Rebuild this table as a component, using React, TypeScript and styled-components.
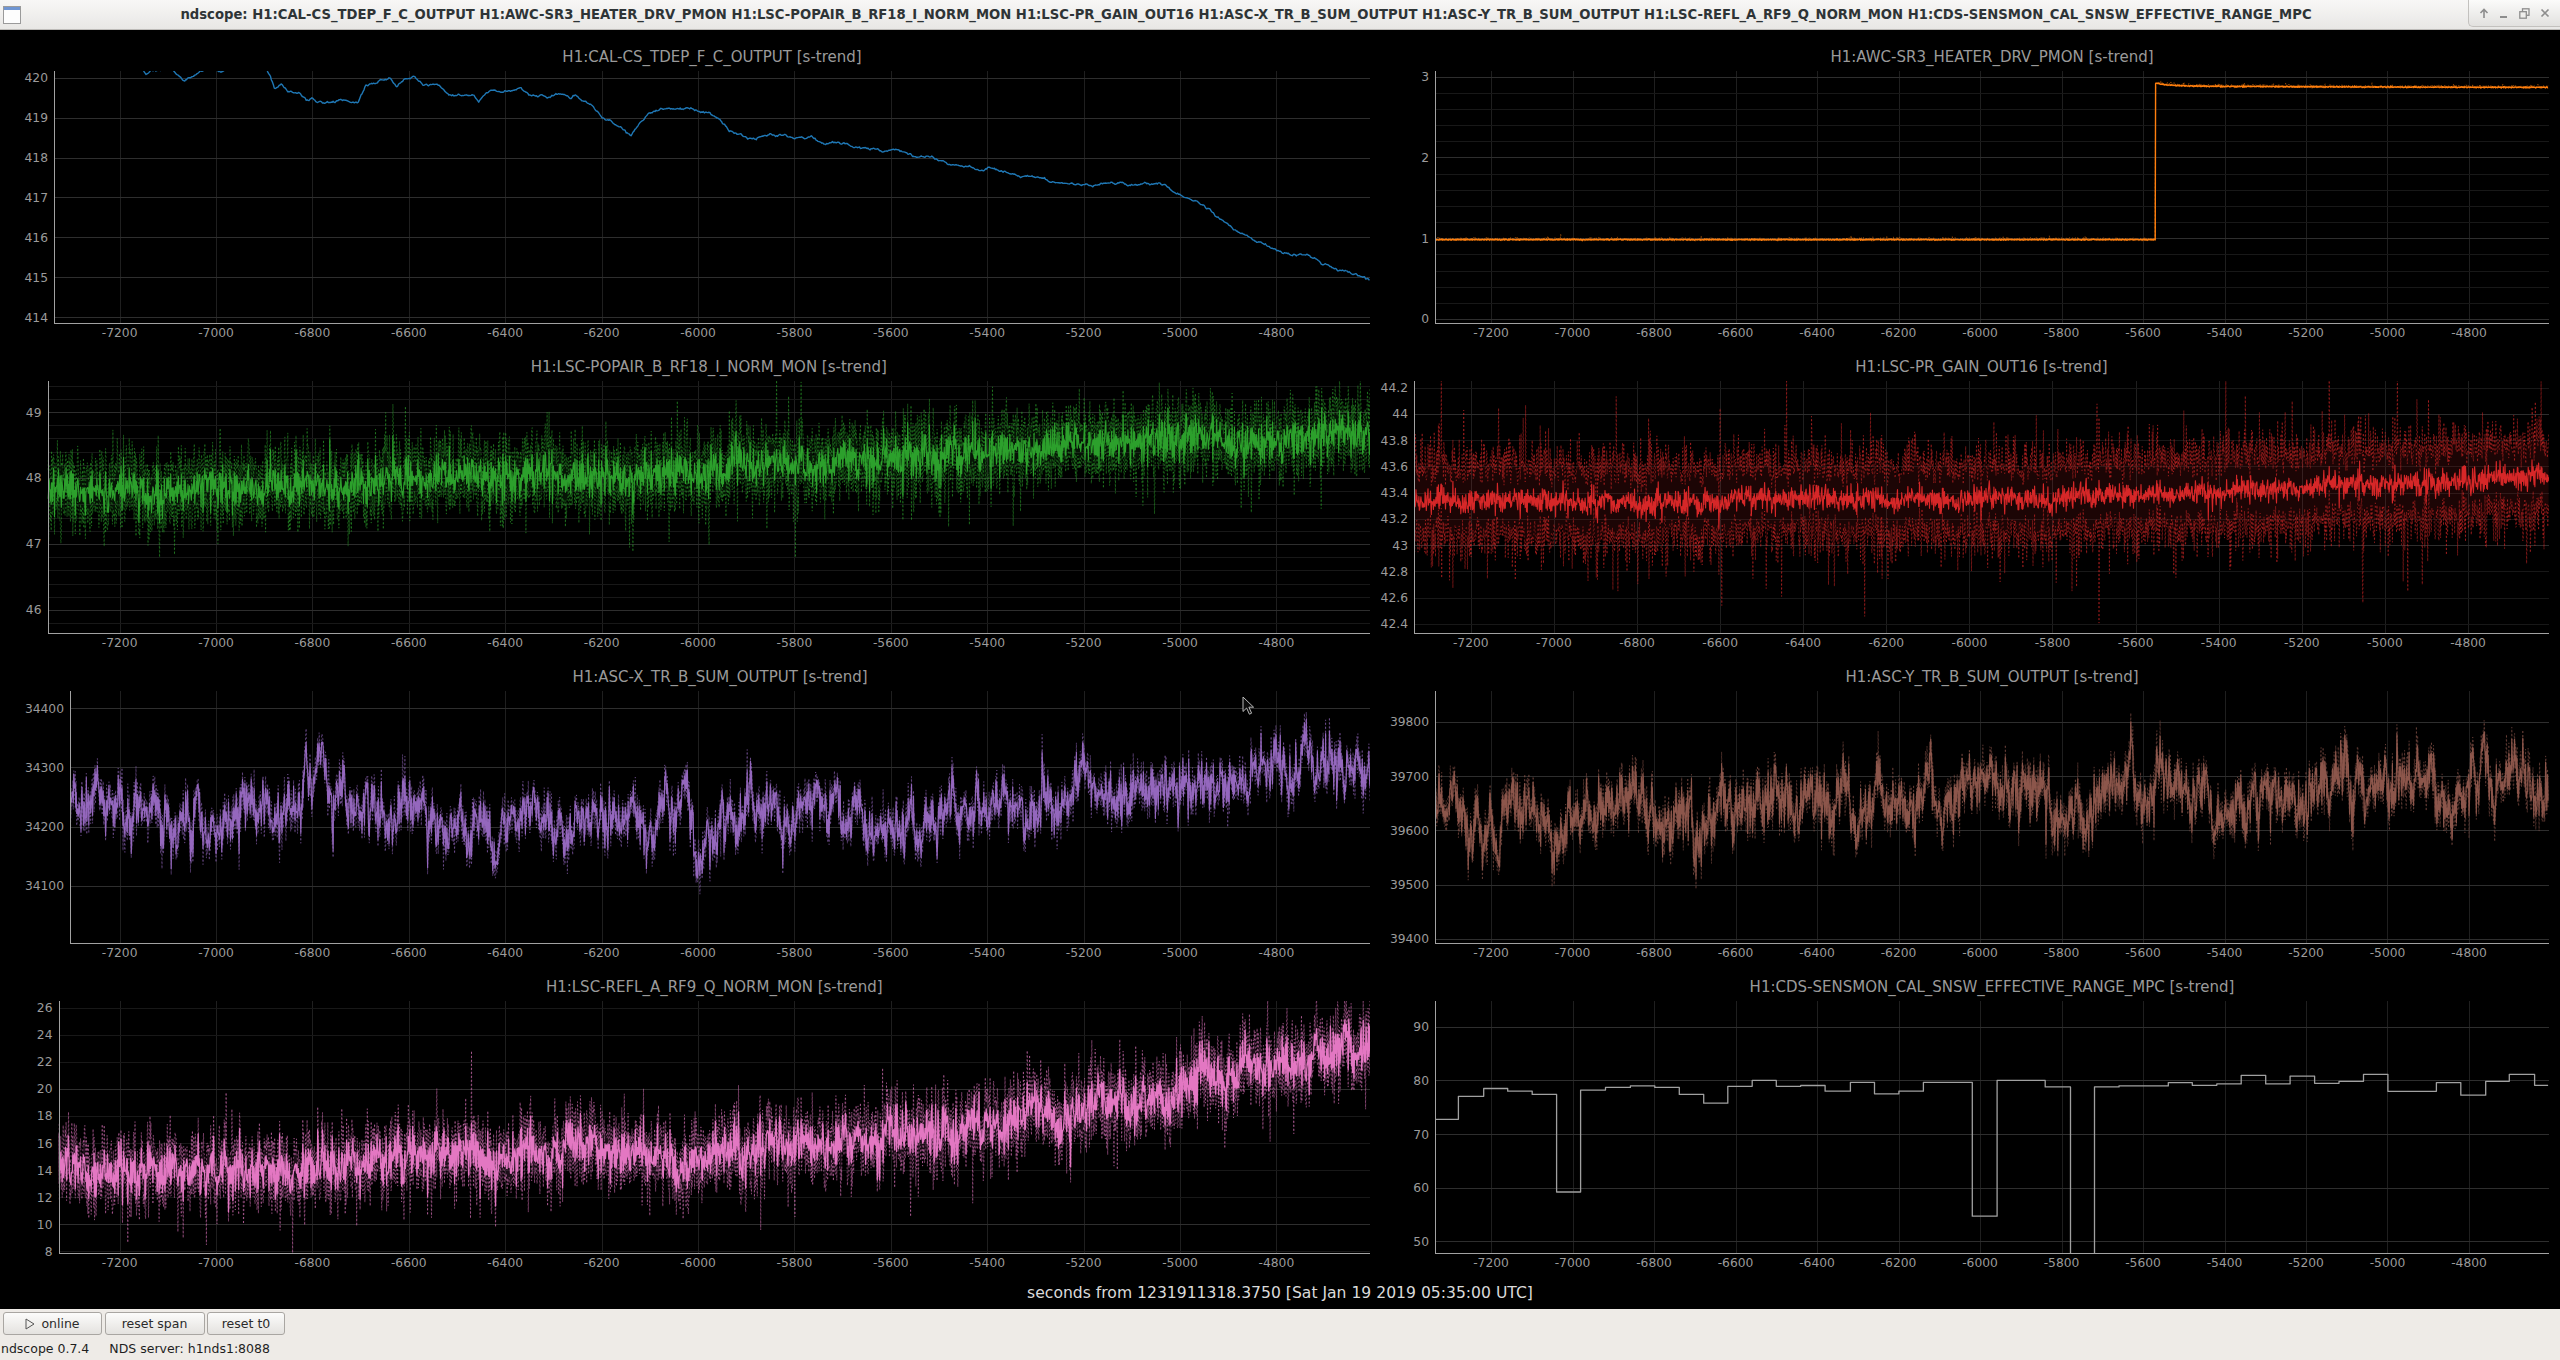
import React, { useMemo } from 'react'
import styled, { createGlobalStyle } from 'styled-components'

const GlobalStyle = createGlobalStyle`
  html, body {
    margin: 0;
    padding: 0;
    background: #000;
  }
  body {
    font-family: 'DejaVu Sans', 'Liberation Sans', sans-serif;
    overflow: hidden;
  }
`

// time axis (seconds relative to t0)
const T_END = -4606
const XTICKS = [-7200, -7000, -6800, -6600, -6400, -6200, -6000, -5800, -5600, -5400, -5200, -5000, -4800]
const LEFT_W = 1370
const RIGHT_W = 1190
const CHART_H = 269
const PLOT_H = 252

type Pt = [number, number]
type Series = { t: number[]; mean: number[]; lo?: number[]; hi?: number[] }

type PlotSpec = {
  title: string
  color: string
  axisX: number
  right: number
  x0: number
  k: number
  yTop: number
  yBot: number
  labels: number[]
  major: number[]
  minor: number[]
  series: Series
  lineWidth?: number
  envFill?: number
}

function mulberry32(seed: number) {
  let a = seed
  return () => {
    a |= 0
    a = (a + 0x6d2b79f5) | 0
    let t = Math.imul(a ^ (a >>> 15), 1 | a)
    t = (t + Math.imul(t ^ (t >>> 7), 61 | t)) ^ t
    return ((t ^ (t >>> 14)) >>> 0) / 4294967296
  }
}

function gauss(r: () => number) {
  let u = 0
  while (u === 0) u = r()
  const v = r()
  return Math.sqrt(-2 * Math.log(u)) * Math.cos(2 * Math.PI * v)
}

function interp(pts: Pt[], t: number) {
  if (t <= pts[0][0]) return pts[0][1]
  for (let i = 1; i < pts.length; i++) {
    if (t <= pts[i][0]) {
      const [ta, va] = pts[i - 1]
      const [tb, vb] = pts[i]
      return va + ((vb - va) * (t - ta)) / (tb - ta)
    }
  }
  return pts[pts.length - 1][1]
}

function ticks(a: number, b: number, step: number) {
  const n = Math.round((b - a) / step)
  return Array.from({ length: n + 1 }, (_, i) => +(a + i * step).toFixed(6))
}

function without(list: number[], drop: number[]) {
  return list.filter((v) => !drop.some((d) => Math.abs(d - v) < 1e-6))
}

type NoiseCfg = {
  seed: number
  trend: Pt[]
  slowA: number
  slowB: number
  white: number
  env: number
  envJit: number
}

function noisy(t0: number, c: NoiseCfg): Series {
  const r = mulberry32(c.seed)
  let a = 0
  let b = 0
  const t: number[] = []
  const mean: number[] = []
  const lo: number[] = []
  const hi: number[] = []
  const ra = Math.sqrt(1 - 0.995 * 0.995)
  const rb = Math.sqrt(1 - 0.9 * 0.9)
  for (let s = t0; s <= T_END; s += 1) {
    a = 0.995 * a + ra * c.slowA * gauss(r)
    b = 0.9 * b + rb * c.slowB * gauss(r)
    const spike = r() < 0.025 ? 1.8 : 1
    const m = interp(c.trend, s) + a + b + c.white * gauss(r) * spike
    const e1 = (c.env + c.envJit * Math.abs(gauss(r))) * (r() < 0.03 ? 1.9 : 1)
    const e2 = (c.env + c.envJit * Math.abs(gauss(r))) * (r() < 0.03 ? 1.9 : 1)
    t.push(s)
    mean.push(m)
    lo.push(m - e1)
    hi.push(m + e2)
  }
  return { t, mean, lo, hi }
}

function calOutput(): Series {
  const pts: Pt[] = [
    [-7337, 420.6], [-7160, 420.4], [-7145, 420.04], [-7132, 420.22], [-7090, 420.22], [-7066, 419.92],
    [-7030, 420.12], [-7005, 420.3], [-6995, 420.13], [-6968, 420.16], [-6902, 420.4], [-6890, 420.1],
    [-6878, 419.7], [-6866, 419.8], [-6852, 419.65], [-6830, 419.65], [-6810, 419.45], [-6790, 419.38],
    [-6760, 419.38], [-6745, 419.46], [-6722, 419.42], [-6705, 419.38], [-6690, 419.8], [-6670, 419.88],
    [-6652, 419.95], [-6640, 420.0], [-6625, 419.82], [-6606, 419.96], [-6590, 420.03], [-6572, 419.84],
    [-6545, 419.8], [-6522, 419.6], [-6500, 419.55], [-6465, 419.55], [-6455, 419.38], [-6438, 419.62],
    [-6410, 419.66], [-6386, 419.68], [-6370, 419.78], [-6350, 419.6], [-6330, 419.57], [-6300, 419.48],
    [-6285, 419.58], [-6258, 419.52], [-6240, 419.38], [-6220, 419.33], [-6200, 419.02], [-6175, 418.85],
    [-6152, 418.68], [-6138, 418.56], [-6120, 418.9], [-6100, 419.1], [-6070, 419.2], [-6040, 419.26],
    [-6010, 419.16], [-5975, 419.1], [-5957, 418.95], [-5935, 418.62], [-5905, 418.55], [-5880, 418.46],
    [-5850, 418.62], [-5821, 418.6], [-5800, 418.5], [-5770, 418.52], [-5740, 418.38], [-5700, 418.34],
    [-5660, 418.26], [-5618, 418.2], [-5585, 418.22], [-5550, 418.06], [-5515, 418.0], [-5483, 417.86],
    [-5450, 417.82], [-5415, 417.73], [-5370, 417.68], [-5340, 417.56], [-5300, 417.52], [-5270, 417.4],
    [-5246, 417.36], [-5210, 417.33], [-5178, 417.32], [-5130, 417.36], [-5077, 417.34], [-5043, 417.38],
    [-5025, 417.22], [-5009, 417.1], [-4975, 416.95], [-4941, 416.72], [-4915, 416.45], [-4890, 416.25],
    [-4865, 416.05], [-4840, 415.92], [-4815, 415.75], [-4789, 415.6], [-4760, 415.55], [-4738, 415.52],
    [-4705, 415.36], [-4670, 415.2], [-4640, 415.05], [-4606, 414.95],
  ]
  const r = mulberry32(11)
  let b = 0
  const t: number[] = []
  const mean: number[] = []
  for (let s = -7337; s <= T_END; s += 2) {
    b = 0.85 * b + 0.014 * gauss(r)
    t.push(s)
    mean.push(interp(pts, s) + b)
  }
  return { t, mean }
}

function heater(): Series {
  const r = mulberry32(23)
  const t: number[] = []
  const mean: number[] = []
  const lo: number[] = []
  const hi: number[] = []
  for (let s = -7337; s <= T_END; s += 1) {
    const dt = s + 5569
    const m =
      dt < 0
        ? 0.982 + 0.003 * gauss(r)
        : 2.862 + 0.022 * Math.exp(-dt / 700) + 0.035 * Math.exp(-dt / 35) + 0.003 * gauss(r)
    t.push(s)
    mean.push(m)
    lo.push(m - 0.004 - 0.004 * Math.abs(gauss(r)))
    hi.push(m + 0.004 + 0.01 * Math.abs(gauss(r)) * (r() < 0.05 ? 2 : 1))
  }
  return { t, mean, lo, hi }
}

function senseRange(): Series {
  const steps: Pt[] = [
    [-7337, 72.75], [-7280, 77.05], [-7218, 78.5], [-7159, 78.0], [-7099, 77.4], [-7039, 59.2],
    [-6980, 78.2], [-6919, 78.7], [-6858, 79.0], [-6798, 78.7], [-6738, 77.4], [-6678, 75.75],
    [-6619, 78.9], [-6559, 80.0], [-6500, 78.9], [-6440, 79.05], [-6380, 78.0], [-6318, 79.65],
    [-6259, 77.5], [-6199, 78.0], [-6139, 79.65], [-6019, 54.7], [-5958, 80.0], [-5840, 78.8],
    [-5778, 20], [-5719, 78.8], [-5659, 78.97], [-5538, 79.6], [-5479, 79.1], [-5419, 79.35],
    [-5359, 80.96], [-5299, 79.35], [-5239, 80.8], [-5179, 79.47], [-5119, 79.84], [-5059, 81.14],
    [-4999, 77.98], [-4880, 79.6], [-4820, 77.24], [-4759, 79.84], [-4701, 81.14], [-4639, 79.1],
  ]
  const t: number[] = []
  const mean: number[] = []
  steps.forEach(([ts, v], i) => {
    if (i > 0) {
      t.push(ts)
      mean.push(steps[i - 1][1])
    }
    t.push(ts)
    mean.push(v)
  })
  t.push(T_END)
  mean.push(steps[steps.length - 1][1])
  return { t, mean }
}

const LEFT_MAP = { x0: 119.6, k: 0.482, right: LEFT_W }
const RIGHT_MAP = { x0: 121, k: 0.4075, right: 1179 }

function startTime(axisX: number, x0: number, k: number) {
  return Math.ceil(-7200 - (x0 - axisX) / k)
}

function buildSpecs(): PlotSpec[] {
  return [
    {
      title: 'H1:CAL-CS_TDEP_F_C_OUTPUT [s-trend]',
      color: '#1f77b4',
      axisX: 54,
      ...LEFT_MAP,
      yTop: 420.17,
      yBot: 413.85,
      labels: ticks(414, 420, 1),
      major: ticks(414, 420, 1),
      minor: [],
      series: calOutput(),
      lineWidth: 1.4,
    },
    {
      title: 'H1:AWC-SR3_HEATER_DRV_PMON [s-trend]',
      color: '#ff7f0e',
      axisX: 65,
      ...RIGHT_MAP,
      yTop: 3.07,
      yBot: -0.05,
      labels: ticks(0, 3, 1),
      major: ticks(0, 3, 1),
      minor: without(ticks(0, 3, 0.2), ticks(0, 3, 1)),
      series: heater(),
      lineWidth: 1.4,
      envFill: 0,
    },
    {
      title: 'H1:LSC-POPAIR_B_RF18_I_NORM_MON [s-trend]',
      color: '#2ca02c',
      axisX: 47.5,
      ...LEFT_MAP,
      yTop: 49.47,
      yBot: 45.65,
      labels: ticks(46, 49, 1),
      major: ticks(46, 49, 1),
      minor: without(ticks(45.8, 49.4, 0.2), ticks(46, 49, 1)),
      series: noisy(startTime(47.5, 119.6, 0.482), {
        seed: 3,
        trend: [[-7337, 47.85], [-6500, 47.95], [-6000, 48.1], [-5415, 48.38], [-5077, 48.52], [-4606, 48.72]],
        slowA: 0.05,
        slowB: 0.05,
        white: 0.16,
        env: 0.17,
        envJit: 0.17,
      }),
    },
    {
      title: 'H1:LSC-PR_GAIN_OUT16 [s-trend]',
      color: '#d62728',
      axisX: 44,
      x0: 100.8,
      k: 0.4155,
      right: 1179,
      yTop: 44.25,
      yBot: 42.33,
      labels: ticks(42.4, 44.2, 0.2),
      major: [43, 44],
      minor: without(ticks(42.4, 44.2, 0.2), [43, 44]),
      series: noisy(startTime(44, 100.8, 0.4155), {
        seed: 5,
        trend: [[-7337, 43.34], [-6000, 43.35], [-5400, 43.4], [-5000, 43.45], [-4606, 43.52]],
        slowA: 0.012,
        slowB: 0.015,
        white: 0.045,
        env: 0.17,
        envJit: 0.13,
      }),
    },
    {
      title: 'H1:ASC-X_TR_B_SUM_OUTPUT [s-trend]',
      color: '#9467bd',
      axisX: 70,
      ...LEFT_MAP,
      yTop: 34428.7,
      yBot: 34003.9,
      labels: ticks(34100, 34400, 100),
      major: ticks(34100, 34400, 100),
      minor: [],
      series: noisy(startTime(70, 119.6, 0.482), {
        seed: 7,
        trend: [[-7337, 34225], [-6000, 34222], [-5400, 34240], [-4800, 34282], [-4606, 34292]],
        slowA: 16,
        slowB: 26,
        white: 15,
        env: 6,
        envJit: 10,
      }),
    },
    {
      title: 'H1:ASC-Y_TR_B_SUM_OUTPUT [s-trend]',
      color: '#8c564b',
      axisX: 65,
      ...RIGHT_MAP,
      yTop: 39857,
      yBot: 39392.6,
      labels: ticks(39400, 39800, 100),
      major: ticks(39400, 39800, 100),
      minor: [],
      series: noisy(startTime(65, 121, 0.4075), {
        seed: 9,
        trend: [[-7337, 39655], [-6000, 39650], [-5400, 39668], [-4606, 39685]],
        slowA: 18,
        slowB: 30,
        white: 17,
        env: 7,
        envJit: 11,
      }),
    },
    {
      title: 'H1:LSC-REFL_A_RF9_Q_NORM_MON [s-trend]',
      color: '#e377c2',
      axisX: 58.5,
      ...LEFT_MAP,
      yTop: 26.49,
      yBot: 7.88,
      labels: ticks(8, 26, 2),
      major: [10, 20],
      minor: without(ticks(8, 26, 2), [10, 20]),
      series: noisy(startTime(58.5, 119.6, 0.482), {
        seed: 13,
        trend: [[-7337, 14], [-6700, 14.2], [-6000, 15.4], [-5750, 16.0], [-5400, 17.2], [-5077, 19.5], [-4738, 22.0], [-4606, 23.2]],
        slowA: 0.35,
        slowB: 0.5,
        white: 0.85,
        env: 0.65,
        envJit: 0.85,
      }),
      lineWidth: 1.3,
    },
    {
      title: 'H1:CDS-SENSMON_CAL_SNSW_EFFECTIVE_RANGE_MPC [s-trend]',
      color: '#a0a0a0',
      axisX: 65,
      ...RIGHT_MAP,
      yTop: 94.8,
      yBot: 47.84,
      labels: ticks(50, 90, 10),
      major: ticks(50, 90, 10),
      minor: [],
      series: senseRange(),
      lineWidth: 1.3,
    },
  ]
}

function fmt(v: number) {
  return String(+v.toFixed(1))
}

const Window = styled.div`
  width: 2560px;
  height: 1360px;
  display: flex;
  flex-direction: column;
  overflow: hidden;
`

const TitleBar = styled.header`
  flex: none;
  height: 30px;
  display: flex;
  align-items: flex-start;
  box-sizing: border-box;
  background: linear-gradient(#f8f7f6, #e8e7e5);
  border-bottom: 1px solid #bdbbb8;
`

const WinIcon = styled.div`
  width: 24px;
  height: 29px;
  display: flex;
  align-items: center;
  justify-content: center;
`

const WinTitle = styled.div`
  flex: 1;
  text-align: center;
  font-family: 'DejaVu Sans', 'Liberation Sans', sans-serif;
  font-weight: bold;
  font-size: 13.2px;
  line-height: 29px;
  color: #2e3436;
  white-space: nowrap;
  overflow: hidden;
`

const WinControls = styled.div`
  width: 92px;
  height: 27px;
  display: flex;
  align-items: center;
  justify-content: space-evenly;
  box-sizing: border-box;
  border-left: 1px solid #c3c1be;
  border-bottom: 1px solid #c3c1be;
  border-bottom-left-radius: 5px;
  background: linear-gradient(#fbfbfa, #e2e1df);
`

const Scope = styled.main`
  position: relative;
  flex: none;
  height: 1279px;
  background: #000;
  display: flex;
  flex-direction: column;
`

const PlotGrid = styled.div`
  display: grid;
  grid-template-columns: ${LEFT_W}px ${RIGHT_W}px;
  grid-template-rows: repeat(4, 310px);
`

const Cell = styled.section`
  display: flex;
  flex-direction: column;
  min-width: 0;
`

const PlotTitle = styled.div<{ $left: number; $right: number }>`
  height: 41px;
  box-sizing: border-box;
  padding: 17px ${(p) => p.$right}px 0 ${(p) => p.$left}px;
  line-height: 20px;
  font-size: 15px;
  color: #9a9a9a;
  text-align: center;
  white-space: nowrap;
`

const ChartSvg = styled.svg`
  display: block;
  flex: none;
`

const TickText = styled.text`
  font-family: 'DejaVu Sans', 'Liberation Sans', sans-serif;
  font-size: 12.3px;
  fill: #9b9b9b;
`

const Caption = styled.div`
  height: 39px;
  box-sizing: border-box;
  padding-top: 13px;
  line-height: 20px;
  font-size: 15.6px;
  color: #dadada;
  text-align: center;
`

const Cursor = styled.svg`
  position: absolute;
  left: 1242px;
  top: 666px;
`

const Footer = styled.footer`
  flex: 1;
  display: flex;
  flex-direction: column;
  background: #eeebe7;
  color: #1e1e1e;
  font-size: 12.5px;
`

const ButtonRow = styled.div`
  display: flex;
  gap: 2.5px;
  height: 29px;
  box-sizing: border-box;
  padding: 3px 0 0 3px;
`

const Button = styled.button<{ $w: number }>`
  width: ${(p) => p.$w}px;
  height: 23px;
  padding: 0;
  display: flex;
  align-items: center;
  justify-content: center;
  gap: 6px;
  font-family: 'DejaVu Sans', 'Liberation Sans', sans-serif;
  font-size: 12.5px;
  color: #2b2b2b;
  background: linear-gradient(#fcfcfb, #e4e2df);
  border: 1px solid #a9a6a2;
  border-radius: 3px;
`

const StatusRow = styled.div`
  display: flex;
  gap: 20px;
  line-height: 21px;
  padding-left: 1px;
`

function pathOf(t: number[], v: number[], xp: (t: number) => number, yp: (v: number) => number) {
  const parts: string[] = []
  for (let i = 0; i < t.length; i++) {
    parts.push(`${i === 0 ? 'M' : 'L'}${xp(t[i]).toFixed(1)},${yp(v[i]).toFixed(1)}`)
  }
  return parts.join('')
}

function Chart({ spec, width, id }: { spec: PlotSpec; width: number; id: string }) {
  const { axisX, right, x0, k, yTop, yBot, color, series } = spec
  const xp = (t: number) => x0 + (t + 7200) * k
  const yp = (v: number) => ((yTop - v) / (yTop - yBot)) * PLOT_H
  const crisp = (n: number) => Math.round(n) + 0.5

  const paths = useMemo(() => {
    const mean = pathOf(series.t, series.mean, xp, yp)
    if (!series.lo || !series.hi) return { mean }
    const lo = pathOf(series.t, series.lo, xp, yp)
    const hi = pathOf(series.t, series.hi, xp, yp)
    const back = pathOf([...series.t].reverse(), [...series.lo].reverse(), xp, yp).replace(/^M/, 'L')
    return { mean, lo, hi, fill: hi + back + 'Z' }
  }, [spec])

  return (
    <ChartSvg width={width} height={CHART_H}>
      <defs>
        <clipPath id={id}>
          <rect x={axisX} y={0} width={right - axisX} height={PLOT_H} />
        </clipPath>
      </defs>
      <g shapeRendering="crispEdges">
        {XTICKS.map((t) => (
          <line key={t} x1={crisp(xp(t))} x2={crisp(xp(t))} y1={0} y2={PLOT_H} stroke="#1f1f1f" />
        ))}
        {spec.minor.map((v) => (
          <line key={`m${v}`} x1={axisX} x2={right} y1={crisp(yp(v))} y2={crisp(yp(v))} stroke="#181818" />
        ))}
        {spec.major.map((v) => (
          <line key={`M${v}`} x1={axisX} x2={right} y1={crisp(yp(v))} y2={crisp(yp(v))} stroke="#2e2e2e" />
        ))}
      </g>
      <g clipPath={`url(#${id})`} fill="none">
        {paths.fill && spec.envFill !== 0 && <path d={paths.fill} fill={color} fillOpacity={0.13} stroke="none" />}
        {paths.hi && <path d={paths.hi} stroke={color} strokeOpacity={0.5} strokeDasharray="2 2" />}
        {paths.lo && <path d={paths.lo} stroke={color} strokeOpacity={0.5} strokeDasharray="2 2" />}
        <path d={paths.mean} stroke={color} strokeWidth={spec.lineWidth ?? 1.15} strokeLinejoin="round" />
      </g>
      <g shapeRendering="crispEdges" stroke="#a2a2a2">
        <line x1={crisp(axisX)} x2={crisp(axisX)} y1={0} y2={PLOT_H + 1} />
        <line x1={axisX} x2={right} y1={PLOT_H + 0.5} y2={PLOT_H + 0.5} />
      </g>
      {spec.labels.map((v) => (
        <TickText key={`y${v}`} x={axisX - 6} y={yp(v) + 4.5} textAnchor="end">
          {fmt(v)}
        </TickText>
      ))}
      {XTICKS.map((t) => (
        <TickText key={`x${t}`} x={xp(t)} y={PLOT_H + 14} textAnchor="middle">
          {t}
        </TickText>
      ))}
    </ChartSvg>
  )
}

function PlotCell({ spec, width, id }: { spec: PlotSpec; width: number; id: string }) {
  return (
    <Cell>
      <PlotTitle $left={spec.axisX} $right={width - spec.right}>
        {spec.title}
      </PlotTitle>
      <Chart spec={spec} width={width} id={id} />
    </Cell>
  )
}

const TITLE =
  'ndscope: H1:CAL-CS_TDEP_F_C_OUTPUT H1:AWC-SR3_HEATER_DRV_PMON H1:LSC-POPAIR_B_RF18_I_NORM_MON H1:LSC-PR_GAIN_OUT16 H1:ASC-X_TR_B_SUM_OUTPUT H1:ASC-Y_TR_B_SUM_OUTPUT H1:LSC-REFL_A_RF9_Q_NORM_MON H1:CDS-SENSMON_CAL_SNSW_EFFECTIVE_RANGE_MPC'

const App = () => {
  const specs = useMemo(buildSpecs, [])

  return (
    <Window>
      <GlobalStyle />
      <TitleBar>
        <WinIcon>
          <svg width="18" height="18" viewBox="0 0 18 18">
            <rect x="0.5" y="0.5" width="17" height="17" fill="#fdfdfd" stroke="#9a9a9a" />
            <rect x="1" y="1" width="16" height="3" fill="#6f95d2" />
          </svg>
        </WinIcon>
        <WinTitle>{TITLE}</WinTitle>
        <WinControls>
          <svg width="10" height="11" viewBox="0 0 10 11" fill="none" stroke="#8d8d8d" strokeWidth="1.6">
            <path d="M1.5 5 L5 1.5 L8.5 5 M5 1.5 V10" />
          </svg>
          <svg width="9" height="11" viewBox="0 0 9 11">
            <rect x="1" y="8" width="7" height="2" fill="#8d8d8d" />
          </svg>
          <svg width="11" height="11" viewBox="0 0 11 11" fill="none" stroke="#8d8d8d" strokeWidth="1.3">
            <rect x="3.5" y="0.8" width="6.5" height="6.5" />
            <rect x="0.8" y="3.7" width="6.5" height="6.5" fill="#efeeec" />
          </svg>
          <svg width="10" height="10" viewBox="0 0 10 10" stroke="#8d8d8d" strokeWidth="1.7">
            <path d="M1.5 1.5 L8.5 8.5 M8.5 1.5 L1.5 8.5" />
          </svg>
        </WinControls>
      </TitleBar>

      <Scope>
        <PlotGrid>
          {specs.map((s, i) => (
            <PlotCell key={s.title} spec={s} width={i % 2 === 0 ? LEFT_W : RIGHT_W} id={`clip${i}`} />
          ))}
        </PlotGrid>
        <Caption>seconds from 1231911318.3750 [Sat Jan 19 2019 05:35:00 UTC]</Caption>
        <Cursor width="14" height="20" viewBox="0 0 14 20">
          <path d="M1 1 L1 15.5 L4.6 12 L7.4 18.2 L9.6 17.2 L6.9 11.2 L11.6 11.2 Z" fill="#0c0c0c" stroke="#b8b8b8" strokeWidth="1" />
        </Cursor>
      </Scope>

      <Footer>
        <ButtonRow>
          <Button $w={99}>
            <svg width="10" height="12" viewBox="0 0 10 12">
              <path d="M1 1 L9 6 L1 11 Z" fill="none" stroke="#555" strokeWidth="1" />
            </svg>
            online
          </Button>
          <Button $w={100}>reset span</Button>
          <Button $w={78}>reset t0</Button>
        </ButtonRow>
        <StatusRow>
          <span>ndscope 0.7.4</span>
          <span>NDS server: h1nds1:8088</span>
        </StatusRow>
      </Footer>
    </Window>
  )
}

export default App
